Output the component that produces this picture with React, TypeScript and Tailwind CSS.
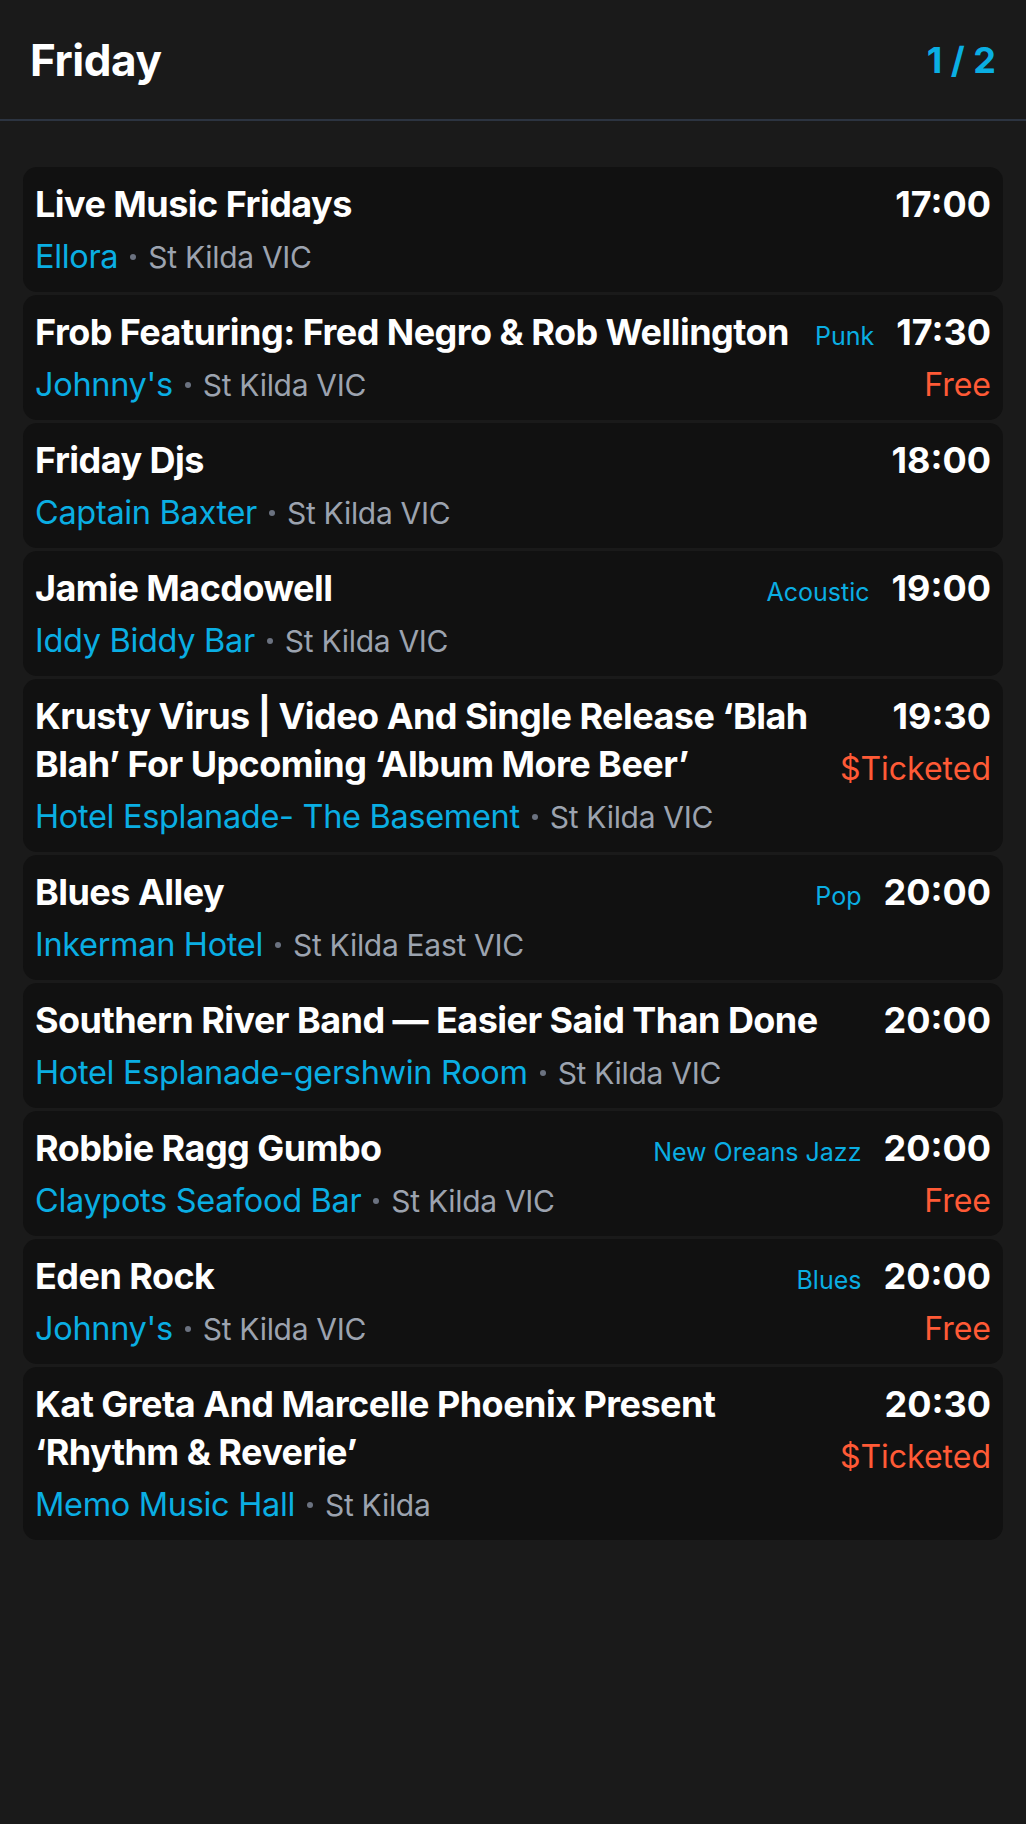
type Gig = {
  title: string;
  venue: string;
  place: string;
  time: string;
  genre?: string;
  price?: string;
};

const gigs: Gig[] = [
  { title: "Live Music Fridays", venue: "Ellora", place: "St Kilda VIC", time: "17:00" },
  {
    title: "Frob Featuring: Fred Negro & Rob Wellington",
    venue: "Johnny's",
    place: "St Kilda VIC",
    time: "17:30",
    genre: "Punk",
    price: "Free",
  },
  { title: "Friday Djs", venue: "Captain Baxter", place: "St Kilda VIC", time: "18:00" },
  {
    title: "Jamie Macdowell",
    venue: "Iddy Biddy Bar",
    place: "St Kilda VIC",
    time: "19:00",
    genre: "Acoustic",
  },
  {
    title: "Krusty Virus | Video And Single Release \u2018Blah Blah\u2019 For Upcoming \u2018Album More Beer\u2019",
    venue: "Hotel Esplanade- The Basement",
    place: "St Kilda VIC",
    time: "19:30",
    price: "$Ticketed",
  },
  {
    title: "Blues Alley",
    venue: "Inkerman Hotel",
    place: "St Kilda East VIC",
    time: "20:00",
    genre: "Pop",
  },
  {
    title: "Southern River Band \u2014 Easier Said Than Done",
    venue: "Hotel Esplanade-gershwin Room",
    place: "St Kilda VIC",
    time: "20:00",
  },
  {
    title: "Robbie Ragg Gumbo",
    venue: "Claypots Seafood Bar",
    place: "St Kilda VIC",
    time: "20:00",
    genre: "New Oreans Jazz",
    price: "Free",
  },
  {
    title: "Eden Rock",
    venue: "Johnny's",
    place: "St Kilda VIC",
    time: "20:00",
    genre: "Blues",
    price: "Free",
  },
  {
    title: "Kat Greta And Marcelle Phoenix Present \u2018Rhythm & Reverie\u2019",
    venue: "Memo Music Hall",
    place: "St Kilda",
    time: "20:30",
    price: "$Ticketed",
  },
];

function GigCard({ gig }: { gig: Gig }) {
  return (
    <div className="flex gap-[22px] rounded-[14px] bg-[#111111] px-3 pt-[13px] pb-[15px]">
      <div className="min-w-0 flex-1">
        <div className="flex items-baseline gap-[6px]">
          <h3 className="min-w-0 flex-1 text-[36px] font-bold leading-[48px] tracking-[-0.015em] text-white">
            {gig.title}
          </h3>
          {gig.genre && (
            <span className="shrink-0 text-[25px] leading-[28px] text-[#0aaee3]">{gig.genre}</span>
          )}
        </div>
        <div className="mt-[9px] flex h-[40px] items-center">
          <span className="text-[32.5px] leading-[40px] tracking-[-0.01em] text-[#0aaee3]">
            {gig.venue}
          </span>
          <span className="mx-[12px] h-[6px] w-[6px] shrink-0 rounded-full bg-[#6b7280]" />
          <span className="text-[30px] leading-[40px] tracking-[-0.01em] text-[#9ca3af]">
            {gig.place}
          </span>
        </div>
      </div>
      <div className="flex shrink-0 flex-col items-end">
        <span className="text-[36px] font-bold leading-[48px] text-white">{gig.time}</span>
        {gig.price && (
          <span className="mt-[9px] text-[32px] leading-[40px] text-[#ff5a36]">{gig.price}</span>
        )}
      </div>
    </div>
  );
}

export default function App() {
  return (
    <div
      className="min-h-screen bg-[#1a1a1a]"
      style={{ fontFamily: "Inter, 'Noto Sans', sans-serif" }}
    >
      <header className="flex h-[121px] items-center justify-between border-b-2 border-[#2c3441] px-[30px]">
        <h1 className="text-[44px] font-bold tracking-[-0.01em] text-white">Friday</h1>
        <span className="text-[36px] font-bold text-[#0aaee3]">1 / 2</span>
      </header>
      <main className="flex flex-col gap-[3px] px-[23px] pt-[46px] pb-10">
        {gigs.map((gig, i) => (
          <GigCard key={i} gig={gig} />
        ))}
      </main>
    </div>
  );
}
